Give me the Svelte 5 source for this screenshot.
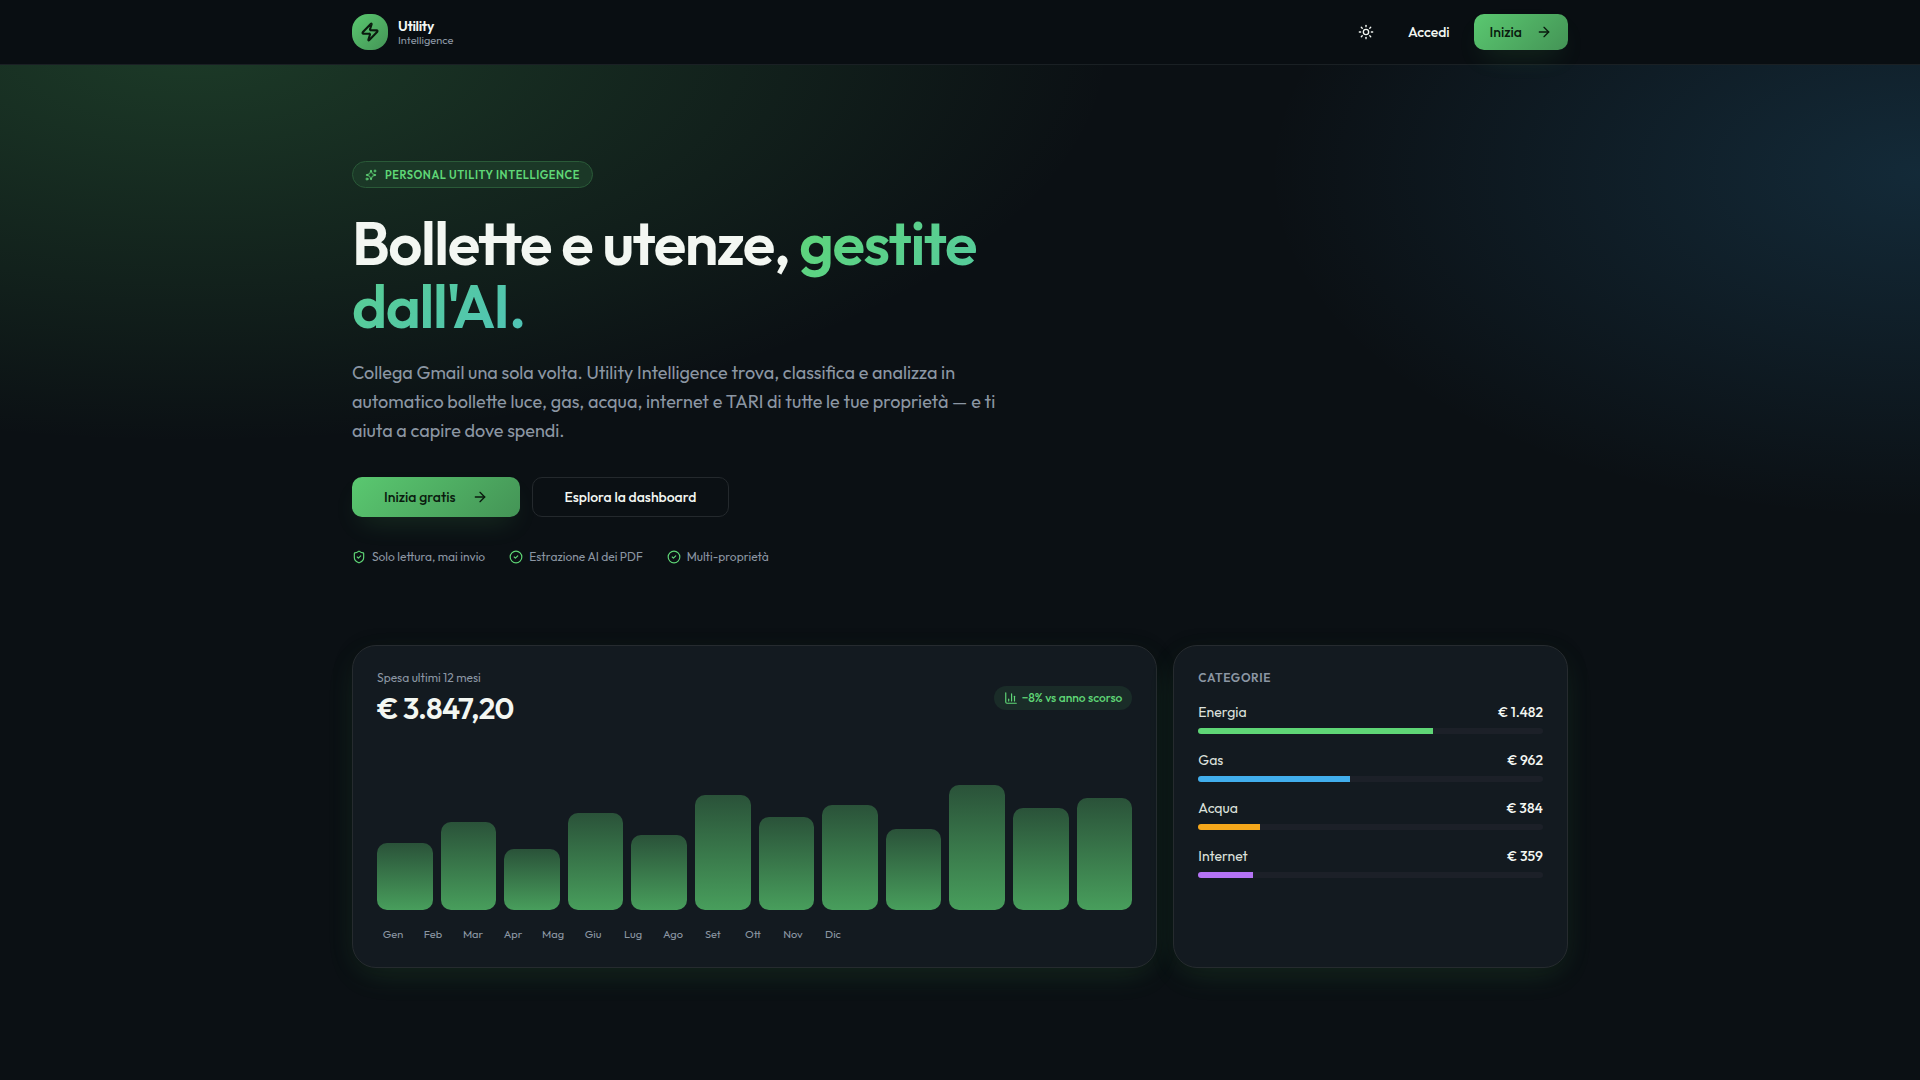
<script>
  // monthly spend, as bar heights in px
  const bars = [67, 88, 61, 97, 75, 115, 93, 105, 81, 125, 102, 112];
  const months = ['Gen', 'Feb', 'Mar', 'Apr', 'Mag', 'Giu', 'Lug', 'Ago', 'Set', 'Ott', 'Nov', 'Dic'];

  const categories = [
    { label: 'Energia', value: '€ 1.482', pct: 68, tone: 'green' },
    { label: 'Gas', value: '€ 962', pct: 44, tone: 'blue' },
    { label: 'Acqua', value: '€ 384', pct: 18, tone: 'amber' },
    { label: 'Internet', value: '€ 359', pct: 16, tone: 'violet' }
  ];
</script>

{#snippet arrow()}
  <svg class="icon" width="16" height="16" viewBox="0 0 24 24" aria-hidden="true">
    <path d="M5 12h14" />
    <path d="m12 5 7 7-7 7" />
  </svg>
{/snippet}

{#snippet check()}
  <svg class="icon" width="14" height="14" viewBox="0 0 24 24" aria-hidden="true">
    <circle cx="12" cy="12" r="10" />
    <path d="m9 12 2 2 4-4" />
  </svg>
{/snippet}

<div class="page">
  <header class="topbar">
    <div class="container topbar-inner">
      <a class="brand" href="/">
        <span class="brand-mark">
          <svg class="icon" width="20" height="20" viewBox="0 0 24 24" aria-hidden="true">
            <path d="M4 14a1 1 0 0 1-.78-1.63l9.9-10.2a.5.5 0 0 1 .86.46l-1.92 6.02A1 1 0 0 0 13 10h7a1 1 0 0 1 .78 1.63l-9.9 10.2a.5.5 0 0 1-.86-.46l1.92-6.02A1 1 0 0 0 11 14z" />
          </svg>
        </span>
        <span class="brand-text">
          <span class="brand-name">Utility</span>
          <span class="brand-sub">Intelligence</span>
        </span>
      </a>

      <nav class="actions">
        <button class="icon-btn" type="button" aria-label="Cambia tema">
          <svg class="icon" width="16" height="16" viewBox="0 0 24 24" aria-hidden="true">
            <circle cx="12" cy="12" r="4" />
            <path d="M12 2v2" />
            <path d="M12 20v2" />
            <path d="m4.93 4.93 1.41 1.41" />
            <path d="m17.66 17.66 1.41 1.41" />
            <path d="M2 12h2" />
            <path d="M20 12h2" />
            <path d="m6.34 17.66-1.41 1.41" />
            <path d="m19.07 4.93-1.41 1.41" />
          </svg>
        </button>
        <a class="link" href="/login">Accedi</a>
        <a class="btn btn-primary btn-sm" href="/signup">Inizia {@render arrow()}</a>
      </nav>
    </div>
  </header>

  <main class="container">
    <section class="hero">
      <span class="badge">
        <svg class="icon" width="12" height="12" viewBox="0 0 24 24" aria-hidden="true">
          <path d="M9.937 15.5A2 2 0 0 0 8.5 14.063l-6.135-1.582a.5.5 0 0 1 0-.962L8.5 9.936A2 2 0 0 0 9.937 8.5l1.582-6.135a.5.5 0 0 1 .963 0L14.063 8.5A2 2 0 0 0 15.5 9.937l6.135 1.581a.5.5 0 0 1 0 .964L15.5 14.063a2 2 0 0 0-1.437 1.437l-1.582 6.135a.5.5 0 0 1-.963 0z" />
          <path d="M20 2v4" />
          <path d="M22 4h-4" />
          <circle cx="4" cy="20" r="2" />
        </svg>
        Personal Utility Intelligence
      </span>
      <h1>Bollette e utenze, <span class="gradient-text">gestite dall'AI.</span></h1>
      <p class="lead">
        Collega Gmail una sola volta. Utility Intelligence trova, classifica e analizza in
        automatico bollette luce, gas, acqua, internet e TARI di tutte le tue proprietà — e ti
        aiuta a capire dove spendi.
      </p>
      <div class="cta">
        <a class="btn btn-primary" href="/signup">Inizia gratis {@render arrow()}</a>
        <a class="btn btn-outline" href="/dashboard">Esplora la dashboard</a>
      </div>
      <ul class="trust">
        <li>
          <svg class="icon" width="14" height="14" viewBox="0 0 24 24" aria-hidden="true">
            <path d="M20 13c0 5-3.5 7.5-7.66 8.95a1 1 0 0 1-.67-.01C7.5 20.5 4 18 4 13V6a1 1 0 0 1 1-1c2 0 4.5-1.2 6.24-2.72a1.17 1.17 0 0 1 1.52 0C14.51 3.81 17 5 19 5a1 1 0 0 1 1 1z" />
            <path d="m9 12 2 2 4-4" />
          </svg>
          Solo lettura, mai invio
        </li>
        <li>{@render check()} Estrazione AI dei PDF</li>
        <li>{@render check()} Multi-proprietà</li>
      </ul>
    </section>

    <section class="preview">
      <article class="card card-wide">
        <div class="card-head">
          <div>
            <div class="muted">Spesa ultimi 12 mesi</div>
            <div class="total">€ 3.847,20</div>
          </div>
          <span class="chip">
            <svg class="icon" width="14" height="14" viewBox="0 0 24 24" aria-hidden="true">
              <path d="M3 3v16a2 2 0 0 0 2 2h16" />
              <path d="M18 17V9" />
              <path d="M13 17V5" />
              <path d="M8 17v-3" />
            </svg>
            −8% vs anno scorso
          </span>
        </div>
        <div class="chart">
          {#each bars as height}
            <div class="bar" style="height: {height}px"></div>
          {/each}
        </div>
        <div class="months">
          {#each months as month}
            <span>{month}</span>
          {/each}
        </div>
      </article>

      <article class="card">
        <h2>Categorie</h2>
        <ul class="categories">
          {#each categories as category}
            <li>
              <div class="category-row">
                <span>{category.label}</span>
                <strong>{category.value}</strong>
              </div>
              <div class="track">
                <div class="fill {category.tone}" style="width: {category.pct}%"></div>
              </div>
            </li>
          {/each}
        </ul>
      </article>
    </section>
  </main>
</div>

<style>
  :global(body) {
    background: #0b1014;
  }

  .page {
    min-height: 100vh;
    box-sizing: border-box;
    padding-bottom: 80px;
    background:
      radial-gradient(ellipse 48% 37% at 10% 4%, rgba(90, 210, 110, 0.22), transparent),
      radial-gradient(ellipse 34% 32% at 100% 16%, rgba(60, 170, 235, 0.17), transparent),
      #0b1014;
    color: #f3f7f2;
    font-family: Outfit, Lato, sans-serif;
    font-size: 14px;
    line-height: 20px;
  }

  .container {
    max-width: 1216px;
    margin: 0 auto;
    padding: 0 32px;
  }

  .icon {
    flex: none;
    fill: none;
    stroke: currentColor;
    stroke-width: 2;
    stroke-linecap: round;
    stroke-linejoin: round;
  }

  a {
    color: inherit;
    text-decoration: none;
  }

  ul {
    list-style: none;
    margin: 0;
    padding: 0;
  }

  .topbar {
    background: #090e12;
    border-bottom: 1px solid #1a2024;
  }

  .topbar-inner {
    display: flex;
    align-items: center;
    justify-content: space-between;
    height: 64px;
  }

  .brand {
    display: flex;
    align-items: center;
    gap: 10px;
  }

  .brand-mark {
    display: flex;
    align-items: center;
    justify-content: center;
    width: 36px;
    height: 36px;
    border-radius: 16px;
    background: linear-gradient(135deg, #5ac870, #449456);
    color: #0a1a0e;
  }

  .brand-mark .icon {
    stroke-width: 2.5;
  }

  .brand-text {
    display: flex;
    flex-direction: column;
    padding-top: 2px;
    line-height: 14px;
  }

  .brand-name {
    font-weight: 600;
    letter-spacing: -0.025em;
  }

  .brand-sub {
    font-size: 11px;
    color: #8b96a3;
  }

  .actions {
    display: flex;
    align-items: center;
    gap: 8px;
  }

  .icon-btn {
    display: flex;
    align-items: center;
    justify-content: center;
    width: 36px;
    height: 36px;
    padding: 0;
    border: 0;
    border-radius: 10px;
    background: transparent;
    color: inherit;
    cursor: pointer;
  }

  .link {
    padding: 8px 16px;
    font-weight: 500;
  }

  .btn {
    display: inline-flex;
    align-items: center;
    justify-content: center;
    gap: 16px;
    height: 40px;
    box-sizing: border-box;
    padding: 0 32px;
    border-radius: 10px;
    font-weight: 500;
    white-space: nowrap;
  }

  .btn-sm {
    gap: 14px;
    height: 36px;
    padding: 0 16px;
  }

  .btn-primary {
    background: linear-gradient(135deg, #5ac870, #449456);
    color: #0a1a0e;
    box-shadow: 0 12px 28px -10px rgba(90, 210, 110, 0.2);
  }

  .btn-outline {
    border: 1px solid #24292d;
    background: #0b1014;
  }

  .hero {
    max-width: 672px;
    padding: 96px 0 80px;
  }

  .badge {
    display: inline-flex;
    align-items: center;
    gap: 8px;
    height: 27px;
    box-sizing: border-box;
    padding: 0 12px;
    border: 1px solid #2a5a38;
    border-radius: 14px;
    background: #1b3827;
    color: #5fd676;
    font-size: 11px;
    line-height: 16px;
    font-weight: 600;
    letter-spacing: 0.05em;
    text-transform: uppercase;
  }

  h1 {
    margin: 24px 0 20px;
    font-size: 60px;
    line-height: 63px;
    font-weight: 600;
    letter-spacing: -0.025em;
  }

  .gradient-text {
    background: linear-gradient(135deg, #5fd676, #4fc3b8);
    -webkit-background-clip: text;
    background-clip: text;
    color: transparent;
  }

  .lead {
    margin: 0 0 32px;
    font-size: 18px;
    line-height: 29px;
    color: #8b96a3;
  }

  .cta {
    display: flex;
    gap: 12px;
  }

  .trust {
    display: flex;
    gap: 24px;
    margin-top: 32px;
    font-size: 12px;
    line-height: 16px;
    color: #8b96a3;
  }

  .trust li {
    display: flex;
    align-items: center;
    gap: 6px;
  }

  .trust .icon {
    color: #5fd676;
  }

  .preview {
    display: grid;
    grid-template-columns: repeat(3, 1fr);
    gap: 16px;
  }

  .card {
    padding: 24px;
    border: 1px solid #262b2f;
    border-radius: 24px;
    background: #131a20;
    box-shadow:
      0 2px 20px rgba(0, 0, 0, 0.2),
      0 10px 32px -8px rgba(90, 210, 110, 0.18);
  }

  .card-wide {
    grid-column: span 2;
  }

  .card-head {
    display: flex;
    align-items: center;
    justify-content: space-between;
    margin-bottom: 24px;
  }

  .muted {
    font-size: 12px;
    line-height: 16px;
    color: #8b96a3;
  }

  .total {
    margin-top: 4px;
    font-size: 30px;
    line-height: 36px;
    font-weight: 600;
    letter-spacing: -0.025em;
  }

  .chip {
    display: flex;
    align-items: center;
    gap: 4px;
    height: 24px;
    padding: 0 10px;
    border-radius: 12px;
    background: #1a2c28;
    color: #5fd676;
    font-size: 12px;
    font-weight: 500;
  }

  .chart {
    display: flex;
    align-items: flex-end;
    gap: 8px;
    height: 160px;
  }

  .bar {
    flex: 1;
    border-radius: 10px;
    background: linear-gradient(to top, #489e5c, #2a5239);
  }

  .months {
    display: flex;
    gap: 8px;
    margin-top: 16px;
    font-size: 11px;
    line-height: 17px;
    color: #8b96a3;
  }

  .months span {
    width: 32px;
    text-align: center;
  }

  h2 {
    margin: 0 0 16px;
    font-size: 12px;
    line-height: 16px;
    font-weight: 600;
    letter-spacing: 0.05em;
    text-transform: uppercase;
    color: #8b96a3;
  }

  .categories {
    display: flex;
    flex-direction: column;
    gap: 16px;
  }

  .category-row {
    display: flex;
    justify-content: space-between;
    margin-bottom: 6px;
    color: #dde1dd;
  }

  .category-row strong {
    font-weight: 500;
    color: #f3f7f2;
  }

  .track {
    height: 6px;
    overflow: hidden;
    border-radius: 3px;
    background: #1c2028;
  }

  .fill {
    height: 100%;
  }

  .green {
    background: #5fd676;
  }

  .blue {
    background: #41aeec;
  }

  .amber {
    background: #f5a71b;
  }

  .violet {
    background: #b573f5;
  }

  @media (max-width: 900px) {
    .preview {
      grid-template-columns: 1fr;
    }

    .card-wide {
      grid-column: auto;
    }
  }
</style>
